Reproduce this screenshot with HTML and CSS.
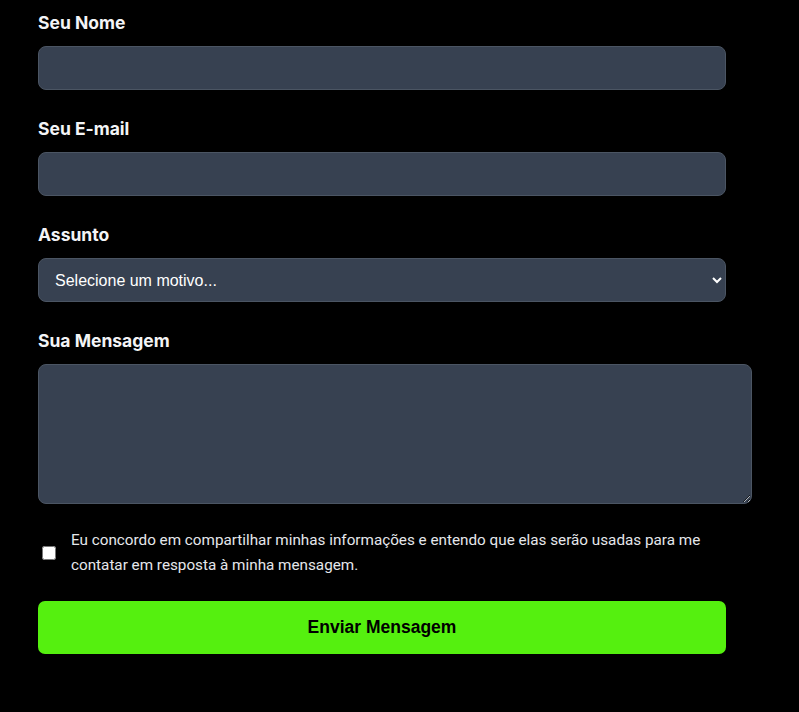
FILE: index.html
```html
<!DOCTYPE html>
<html lang="pt-BR">
<head>
<meta charset="utf-8">
<title>Contato</title>
<link rel="stylesheet" href="styles.css">
</head>
<body>
<form class="contact-form">
  <div class="field">
    <label class="field-label" for="nome">Seu Nome</label>
    <input class="field-input" id="nome" type="text">
  </div>
  <div class="field">
    <label class="field-label" for="email">Seu E-mail</label>
    <input class="field-input" id="email" type="email">
  </div>
  <div class="field">
    <label class="field-label" for="assunto">Assunto</label>
    <select class="field-input field-select" id="assunto">
      <option>Selecione um motivo...</option>
    </select>
  </div>
  <div class="field">
    <label class="field-label" for="mensagem">Sua Mensagem</label>
    <textarea class="field-textarea" id="mensagem"></textarea>
  </div>
  <div class="consent">
    <input class="consent-box" type="checkbox" id="consent">
    <label class="consent-text" for="consent">Eu concordo em compartilhar minhas informações e entendo que elas serão usadas para me contatar em resposta à minha mensagem.</label>
  </div>
  <button class="submit" type="button">Enviar Mensagem</button>
</form>
</body>
</html>
```

FILE: styles.css
```css
html, body {
  margin: 0;
  padding: 0;
  background: #000;
}

.contact-form {
  width: 688px;
  margin: 0 0 0 38px;
  padding-top: 8px;
  display: flex;
  flex-direction: column;
  gap: 24px;
}

.field {
  display: flex;
  flex-direction: column;
}

.field-label {
  font-family: Inter, "Liberation Sans", sans-serif;
  font-weight: 700;
  font-size: 17.5px;
  line-height: 28px;
  padding-top: 1px;
  color: #f3f4f6;
  margin-bottom: 9px;
}

.field-input {
  box-sizing: border-box;
  width: 100%;
  height: 44px;
  background: #374151;
  border: 1px solid #4b5563;
  border-radius: 8px;
  color: #fff;
  font-family: "Liberation Sans", Arial, sans-serif;
  font-size: 16px;
  padding: 0 12px;
  margin: 0;
  outline: none;
}

.field-select {
  padding-left: 12px;
}

.field-textarea {
  display: block;
  box-sizing: content-box;
  width: 100%;
  height: 114px;
  padding: 12px;
  margin: 0;
  background: #374151;
  border: 1px solid #4b5563;
  border-radius: 8px;
  color: #fff;
  font-family: "Liberation Sans", Arial, sans-serif;
  font-size: 16px;
  outline: none;
}

.consent {
  display: flex;
  align-items: center;
}

.consent-box {
  margin: 3px 15px 3px 4px;
  width: 14px;
  height: 14px;
  flex: none;
}

.consent-text {
  font-family: Roboto, "Liberation Sans", sans-serif;
  font-size: 15.25px;
  line-height: 25.2px;
  color: #e5e7eb;
}

.submit {
  display: block;
  width: 100%;
  height: 53px;
  margin-top: -1px;
  background: #55f00f;
  border: none;
  border-radius: 7px;
  color: #000;
  font-family: "Liberation Sans", Arial, sans-serif;
  font-weight: 700;
  font-size: 17.5px;
  cursor: pointer;
}
```
